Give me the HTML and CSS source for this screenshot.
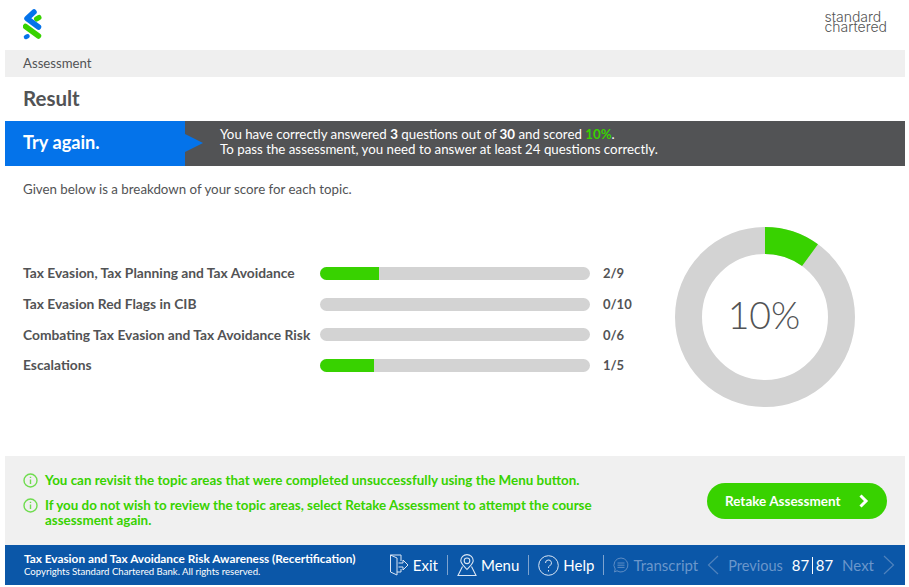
FILE: index.html
```html
<!DOCTYPE html>
<html lang="en">
<head>
  <meta charset="UTF-8">
  <title>Assessment Result</title>
  <link rel="stylesheet" href="styles.css">
</head>
<body>
  <div class="page">
    <header class="top">
      <svg class="logo" width="20" height="32" viewBox="0 0 20 32">
        <path d="M2.500 18.500 L15.500 28" fill="none" stroke="#38d200" stroke-width="5.500" stroke-linecap="round"/>
        <path d="M16 9.500 L13.500 11" fill="none" stroke="#38d200" stroke-width="5" stroke-linecap="round"/>
        <path d="M11 4 L4 10.500 L15.500 19" fill="none" stroke="#0473ea" stroke-width="5.500" stroke-linecap="round" stroke-linejoin="round"/>
        <path d="M3 29 L4.500 28.300" fill="none" stroke="#0473ea" stroke-width="4.500" stroke-linecap="round"/>
      </svg>
      <div class="wordmark">standard<br>chartered</div>
    </header>

    <div class="crumb">Assessment</div>
    <h1 class="title">Result</h1>

    <div class="banner">
      <div class="banner-flag">Try again.</div>
      <div class="banner-text">
        You have correctly answered <b>3</b> questions out of <b>30</b> and scored <b class="green">10%</b>.<br>
        To pass the assessment, you need to answer at least 24 questions correctly.
      </div>
    </div>

    <p class="intro">Given below is a breakdown of your score for each topic.</p>

    <section class="breakdown">
      <div class="topics">
        <div class="topic">Tax Evasion, Tax Planning and Tax Avoidance</div>
        <div class="bar"><div class="fill" style="width: 22%"></div></div>
        <div class="score">2/9</div>

        <div class="topic">Tax Evasion Red Flags in CIB</div>
        <div class="bar"></div>
        <div class="score">0/10</div>

        <div class="topic">Combating Tax Evasion and Tax Avoidance Risk</div>
        <div class="bar"></div>
        <div class="score">0/6</div>

        <div class="topic">Escalations</div>
        <div class="bar"><div class="fill" style="width: 20%"></div></div>
        <div class="score">1/5</div>
      </div>

      <div class="donut">
        <svg width="180" height="180" viewBox="0 0 180 180">
          <circle cx="90" cy="90" r="76.500" fill="none" stroke="#d3d3d3" stroke-width="27"/>
          <circle cx="90" cy="90" r="76.500" fill="none" stroke="#38d200" stroke-width="27" stroke-dasharray="48.070 480.660" transform="rotate(-90 90 90)"/>
        </svg>
        <div class="donut-value">10%</div>
      </div>
    </section>

    <section class="notes">
      <div class="note-list">
        <div class="note">
          <svg class="info" width="15" height="15" viewBox="0 0 15 15">
            <circle cx="7.500" cy="7.500" r="6.500" fill="none" stroke="#6fdc4f" stroke-width="1.400"/>
            <path d="M7.500 6.500 V11 M7.500 3.800 V5" stroke="#6fdc4f" stroke-width="1.400" fill="none"/>
          </svg>
          <span>You can revisit the topic areas that were completed unsuccessfully using the Menu button.</span>
        </div>
        <div class="note">
          <svg class="info" width="15" height="15" viewBox="0 0 15 15">
            <circle cx="7.500" cy="7.500" r="6.500" fill="none" stroke="#6fdc4f" stroke-width="1.400"/>
            <path d="M7.500 6.500 V11 M7.500 3.800 V5" stroke="#6fdc4f" stroke-width="1.400" fill="none"/>
          </svg>
          <span>If you do not wish to review the topic areas, select Retake Assessment to attempt the course assessment again.</span>
        </div>
      </div>
      <button class="retake">
        <span>Retake Assessment</span>
        <svg width="11" height="14" viewBox="0 0 11 14">
          <path d="M2.500 1.500 L8 7 L2.500 12.500" fill="none" stroke="#fff" stroke-width="3"/>
        </svg>
      </button>
    </section>

    <footer class="footer">
      <div class="course">
        <div class="course-name">Tax Evasion and Tax Avoidance Risk Awareness (Recertification)</div>
        <div class="copy">Copyrights Standard Chartered Bank. All rights reserved.</div>
      </div>
      <nav class="nav">
        <a class="nav-item">
          <svg width="19" height="22" viewBox="0 0 19 22" fill="none" stroke="#dbe6f4" stroke-width="1">
            <path d="M.5 1 L7 4 V21 L.5 18 Z M.5 1 H11 V7 M7 18 H11 V15 M8.500 9 H13 V6 L18 11 L13 16 V13 H8.500"/>
          </svg>
          <span>Exit</span>
        </a>
        <i class="sep"></i>
        <a class="nav-item">
          <svg width="20" height="23" viewBox="0 0 20 23" fill="none" stroke="#dbe6f4" stroke-width="1.100">
            <path d="M10 15.500 C6.500 11.500 3.800 9.500 3.800 6.800 A6.200 6.200 0 0 1 16.200 6.800 C16.200 9.500 13.500 11.500 10 15.500 Z"/>
            <circle cx="10" cy="6.800" r="2.800"/>
            <path d="M5.500 12.500 L1 21.500 H19 L14.500 12.500"/>
          </svg>
          <span>Menu</span>
        </a>
        <i class="sep"></i>
        <a class="nav-item">
          <svg width="21" height="21" viewBox="0 0 21 21" fill="none" stroke="#dbe6f4" stroke-width="1">
            <circle cx="10.500" cy="10.500" r="9.800"/>
            <path d="M7.500 8 A3 3 0 1 1 11.500 10.800 C10.700 11.200 10.500 11.800 10.500 13 M10.500 15 V16.500"/>
          </svg>
          <span>Help</span>
        </a>
        <i class="sep"></i>
        <a class="nav-item off">
          <svg width="16" height="16" viewBox="0 0 16 16" fill="none" stroke="#5f8dc4" stroke-width="1">
            <path d="M8 1 A7 7 0 1 1 4 13.800 L1.500 15 L2.200 12 A7 7 0 0 1 8 1 Z M4.500 6 H11.500 M4.500 8.200 H11.500 M4.500 10.400 H11.500"/>
          </svg>
          <span>Transcript</span>
        </a>
        <svg class="chev" width="12" height="20" viewBox="0 0 12 20" fill="none" stroke="#4f82bd" stroke-width="1.200">
          <path d="M11 1 L1.500 10 L11 19"/>
        </svg>
        <span class="off prev">Previous</span>
        <span class="count">87<i class="count-sep"></i>87</span>
        <span class="off next">Next</span>
        <svg class="chev" width="12" height="20" viewBox="0 0 12 20" fill="none" stroke="#4f82bd" stroke-width="1.200">
          <path d="M1 1 L10.500 10 L1 19"/>
        </svg>
      </nav>
    </footer>
  </div>
</body>
</html>
```

FILE: styles.css
```css
* {
  box-sizing: border-box;
}

body {
  font-family: "Lato", "Open Sans", sans-serif;
  background-color: #fff;
  color: #525355;
  margin: 0;
  padding: 0;
}

.page {
  width: 900px;
  margin-left: 5px;
}

.top {
  height: 50px;
  padding: 8px 18px 0 18px;
  display: flex;
  justify-content: space-between;
  align-items: flex-start;
}

.wordmark {
  font-family: "Inter", sans-serif;
  font-size: 14px;
  font-weight: 300;
  line-height: 10px;
  margin-top: 4px;
  color: #555;
}

.crumb {
  height: 27px;
  background-color: #efefef;
  padding-left: 18px;
  font-size: 13.2px;
  line-height: 27px;
}

.title {
  height: 44px;
  margin: 0;
  padding-left: 18px;
  font-size: 20.5px;
  line-height: 43px;
  font-weight: 700;
}

.banner {
  height: 45px;
  display: flex;
  background-color: #525355;
  color: #fff;
}

.banner-flag {
  position: relative;
  width: 180px;
  padding-left: 18px;
  background-color: #0473ea;
  font-size: 18.200px;
  font-weight: 700;
  line-height: 43px;
}

.banner-flag::after {
  content: "";
  position: absolute;
  left: 180px;
  top: 13px;
  border-left: 18px solid #0473ea;
  border-top: 9px solid transparent;
  border-bottom: 9px solid transparent;
}

.banner-text {
  padding: 6px 0 0 35px;
  font-size: 13.300px;
  line-height: 15px;
}

.green {
  color: #38d200;
}

.intro {
  margin: 0;
  padding: 15px 0 0 18px;
  height: 61px;
  font-size: 13.300px;
  line-height: 16px;
}

.breakdown {
  height: 229px;
  display: flex;
  align-items: flex-start;
}

.topics {
  width: 670px;
  padding: 31px 0 0 18px;
  display: grid;
  grid-template-columns: 297px 270px 1fr;
  grid-auto-rows: 30.700px;
  align-items: center;
  font-size: 13.800px;
  font-weight: 700;
}

.topic {
  margin-bottom: 1px;
}

.bar {
  height: 13px;
  border-radius: 7px;
  background-color: #d3d3d3;
  overflow: hidden;
}

.fill {
  height: 100%;
  background-color: #38d200;
}

.score {
  padding-left: 13px;
  font-size: 13px;
}

.donut {
  display: grid;
  width: 180px;
  height: 180px;
  place-items: center;
  font-size: 37.500px;
  font-weight: 300;
}

.donut svg,
.donut-value {
  grid-area: 1 / 1;
}

.donut-value {
  margin-bottom: 5px;
  margin-right: 2px;
}

.notes {
  height: 89px;
  background-color: #f0f0f0;
  padding: 0 18px;
  display: flex;
  justify-content: space-between;
  align-items: center;
}

.note-list {
  width: 590px;
  color: #38d200;
  font-size: 13.400px;
  font-weight: 700;
  line-height: 15px;
  display: flex;
  flex-direction: column;
  gap: 10px;
}

.note {
  display: flex;
  gap: 7px;
}

.info {
  flex-shrink: 0;
}

.retake {
  width: 180px;
  height: 36px;
  border: none;
  border-radius: 18px;
  background-color: #38d200;
  color: #fff;
  font-family: inherit;
  font-size: 13.500px;
  font-weight: 700;
  display: flex;
  align-items: center;
  justify-content: space-between;
  padding: 0 18px 0 18px;
}

.footer {
  height: 40px;
  background-color: #0b57a8;
  color: #fff;
  display: flex;
  justify-content: space-between;
  align-items: center;
  padding: 0 10px 0 19px;
}

.course-name {
  font-size: 11.800px;
  font-weight: 700;
  line-height: 14px;
}

.copy {
  font-size: 9.600px;
  line-height: 12px;
}

.nav {
  display: flex;
  align-items: center;
  font-size: 15px;
  gap: 9px;
}

.nav-item {
  display: flex;
  align-items: center;
  gap: 4px;
}

.sep {
  width: 1px;
  height: 20px;
  background-color: #7ea3cf;
}

.off {
  color: #6a96cb;
}

.prev {
  font-size: 14.500px;
}

.count {
  display: flex;
  align-items: center;
  gap: 2.500px;
}

.count-sep {
  width: 1.500px;
  height: 17px;
  background-color: #fff;
}
```
